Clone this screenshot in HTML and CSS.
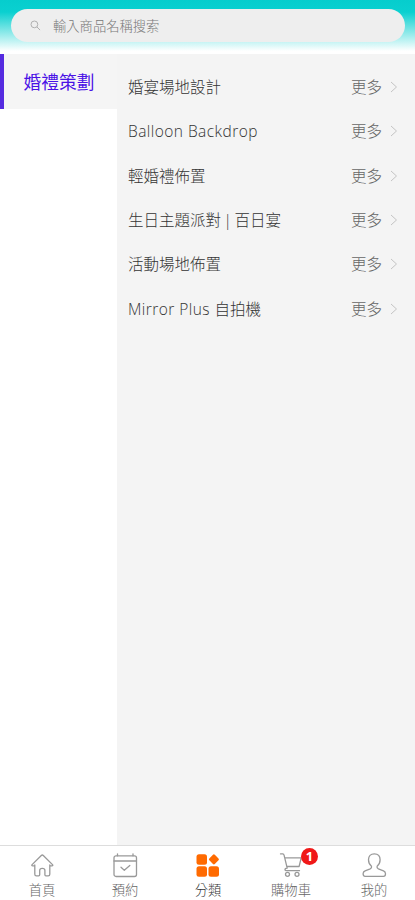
FILE: index.html
```
<!DOCTYPE html>
<html lang="zh-Hant">
<head>
    <meta charset="UTF-8">
    <meta name="viewport" content="width=device-width, initial-scale=1.0">
    <title>分類</title>
    <link rel="stylesheet" href="styles.css">
</head>
<body>
    <header class="header">
        <label class="search">
            <svg class="search-icon" viewBox="0 0 12 12"><circle cx="4.8" cy="4.8" r="3.7"/><path d="M7.6 7.6L11 11"/></svg>
            <input class="search-input" type="text" placeholder="輸入商品名稱搜索">
        </label>
    </header>
    <main class="content">
        <aside class="sidebar">
            <a class="sidebar-item active">婚禮策劃</a>
        </aside>
        <ul class="list">
            <li class="row">
                <span class="name">婚宴場地設計</span>
                <a class="more">更多<svg class="arrow" viewBox="0 0 8 12"><path d="M1 1l5.500 5L1 11"/></svg></a>
            </li>
            <li class="row">
                <span class="name"><span class="latin">Balloon Backdrop</span></span>
                <a class="more">更多<svg class="arrow" viewBox="0 0 8 12"><path d="M1 1l5.500 5L1 11"/></svg></a>
            </li>
            <li class="row">
                <span class="name">輕婚禮佈置</span>
                <a class="more">更多<svg class="arrow" viewBox="0 0 8 12"><path d="M1 1l5.500 5L1 11"/></svg></a>
            </li>
            <li class="row">
                <span class="name divided">生日主題派對 | 百日宴</span>
                <a class="more">更多<svg class="arrow" viewBox="0 0 8 12"><path d="M1 1l5.500 5L1 11"/></svg></a>
            </li>
            <li class="row">
                <span class="name">活動場地佈置</span>
                <a class="more">更多<svg class="arrow" viewBox="0 0 8 12"><path d="M1 1l5.500 5L1 11"/></svg></a>
            </li>
            <li class="row">
                <span class="name"><span class="latin">Mirror Plus </span>自拍機</span>
                <a class="more">更多<svg class="arrow" viewBox="0 0 8 12"><path d="M1 1l5.500 5L1 11"/></svg></a>
            </li>
        </ul>
    </main>
    <nav class="tabbar">
        <a class="tab">
            <svg class="tab-icon" viewBox="0 0 26 26"><path d="M5.800 13v9.200q0 1.600 1.600 1.600h2.300q1 0 1-1v-4.300q0-2.100 2.600-2.100t2.600 2.100v4.300q0 1 1 1h2.300q1.600 0 1.600-1.600V13M3.700 13.800q-1.500 0-.6-1.200l9.200-9.100q1-1 2 0l9.200 9.100q.9 1.200-.6 1.200h-2.100M5.800 13.800H3.700"/></svg>
            <span>首頁</span>
        </a>
        <a class="tab">
            <svg class="tab-icon" viewBox="0 0 26 26"><rect x="2" y="3.800" width="22.500" height="20.700" rx="2"/><path d="M2 9h22.500M5.500 1.800v2M21 1.800v2M9 15.300l3.300 3 5.500-4.800"/></svg>
            <span>預約</span>
        </a>
        <a class="tab current">
            <svg class="tab-icon" viewBox="0 0 26 26"><rect x="1.500" y="2.200" width="10.500" height="10.500" rx="2.500"/><rect x="15" y="3.500" width="7.800" height="7.800" rx="1.300" transform="rotate(45 18.900 7.400)"/><rect x="1.500" y="14.200" width="10.500" height="10.500" rx="2.500"/><rect x="13.500" y="14.200" width="10.500" height="10.500" rx="2.500"/></svg>
            <span>分類</span>
        </a>
        <a class="tab cart">
            <svg class="tab-icon" viewBox="0 0 26 26"><path d="M2.500 1.900h2.300q1 0 1.200 1l3.200 13.300M6.600 5.800h16.600l-2.100 8.700H8.700M9.200 16.200q-2.200 0-2.200 1.500 0 1 1.500 1h13"/><circle cx="9.500" cy="22.300" r="2"/><circle cx="19" cy="22.300" r="2"/></svg>
            <b class="badge">1</b>
            <span>購物車</span>
        </a>
        <a class="tab">
            <svg class="tab-icon" viewBox="0 0 26 26"><path d="M10.500 14.300C8.500 12.700 7.500 10.500 7.500 7.800c0-3.700 2.200-6 5.800-6s5.800 2.300 5.800 6c0 2.700-1 4.900-3 6.500-.4 1.300.2 2 1.300 2.500l5.100 2c1.500.6 2 1.400 2 2.900 0 1.700-.6 2.600-2 2.600H4.100c-1.400 0-2-.9-2-2.600 0-1.500.5-2.300 2-2.900l5.100-2c1.100-.5 1.700-1.200 1.300-2.500z"/></svg>
            <span>我的</span>
        </a>
    </nav>
</body>
</html>
```
FILE: styles.css
```
*{
    box-sizing: border-box;
}

body{
    display: flex;
    flex-direction: column;
    height: 100vh;
    margin: 0;
    overflow: hidden;
    background: #fff;
    font-family: "Open Sans", "Noto Sans CJK TC", sans-serif;
    font-weight: 300;
}

.header{
    flex: none;
    height: 54px;
    padding: 9px 10px 0 11px;
    background: linear-gradient(#06cdcd 0, #0ad0d0 12px, #fff 51px);
}

/* 搜尋框 */
.search{
    display: flex;
    align-items: center;
    height: 33px;
    padding-left: 19px;
    border-radius: 17px;
    background: #eee;
}
.search-icon{
    width: 11px;
    height: 11px;
    margin-right: 12px;
    fill: none;
    stroke: #aaa;
}
.search-input{
    flex: 1;
    min-width: 0;
    padding: 0;
    border: 0;
    outline: 0;
    background: none;
    font: inherit;
    font-size: 13.3px;
}
.search-input::placeholder{
    color: #777;
}

.content{
    display: flex;
    flex: 1;
    min-height: 0;
}

/* 左側分類 */
.sidebar{
    width: 117px;
    background: #fff;
}
.sidebar-item{
    display: flex;
    align-items: center;
    justify-content: center;
    height: 55px;
    border-left: 4px solid transparent;
    padding: 0 3px 2px 0;
    font-size: 17.7px;
}
.sidebar-item.active{
    border-color: #552be0;
    background: #f5f5f5;
    color: #4a12e6;
    font-weight: 400;
}

/* 右側列表 */
.list{
    flex: 1;
    margin: 0;
    padding: 11px 17px 0 11px;
    background: #f4f4f4;
    list-style: none;
}
.row{
    display: flex;
    align-items: center;
    justify-content: space-between;
    height: 44.3px;
    padding-bottom: 1px;
    color: #333;
    font-size: 15.5px;
}
.latin{
    letter-spacing: .45px;
}
.divided{
    word-spacing: -1.5px;
}
.more{
    display: flex;
    align-items: center;
    color: #666;
}
.arrow{
    width: 8px;
    height: 12px;
    margin: 1px 0 0 8px;
    fill: none;
    stroke: #c4c4c4;
}

/* 底部導航 */
.tabbar{
    display: flex;
    flex: none;
    height: 55px;
    border-top: 1px solid #ddd;
    background: #fff;
}
.tab{
    position: relative;
    display: flex;
    flex: 1;
    flex-direction: column;
    align-items: center;
    padding: 6px 0 0 1px;
    color: #666;
    font-size: 13.3px;
    line-height: 18px;
}
.tab-icon{
    width: 26px;
    height: 26px;
    margin-bottom: 3px;
    fill: none;
    stroke: #999;
    stroke-width: 1.3;
    stroke-linecap: round;
    stroke-linejoin: round;
}
.current{
    color: #333;
}
.current .tab-icon{
    fill: #ff6a00;
    stroke: none;
}
.badge{
    position: absolute;
    top: 2px;
    left: 52px;
    width: 17px;
    height: 17px;
    border-radius: 50%;
    background: #f01818;
    color: #fff;
    font-size: 13px;
    font-weight: 700;
    line-height: 17px;
    text-align: center;
}
```
